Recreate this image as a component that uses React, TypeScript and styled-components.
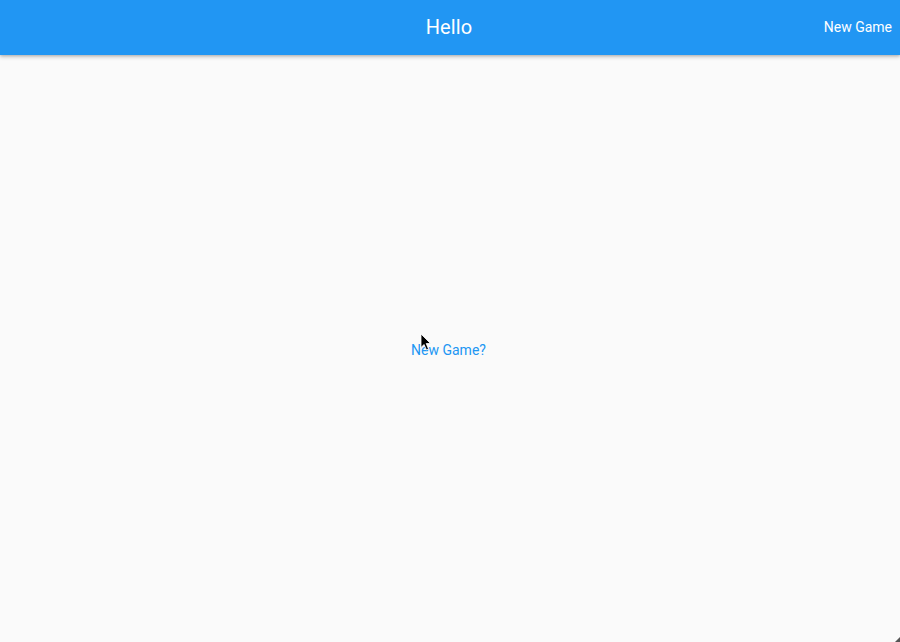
import React from "react";
import styled, { createGlobalStyle } from "styled-components";

const Global = createGlobalStyle`
  html, body { margin: 0; padding: 0; height: 100%; }
  body { background: #fafafa; font-family: Roboto, "Liberation Sans", sans-serif; }
  #root { height: 100%; }
`;

const Page = styled.div`
  display: flex;
  flex-direction: column;
  width: 900px;
  height: 642px;
  background: #fafafa;
  position: relative;
  overflow: hidden;
`;

const AppBar = styled.header`
  position: relative;
  z-index: 1;
  display: grid;
  grid-template-columns: 1fr auto 1fr;
  align-items: center;
  height: 55px;
  background: #2196f3;
  color: #fff;
  box-shadow: 0 2px 4px rgba(0, 0, 0, 0.2), 0 1px 2px rgba(0, 0, 0, 0.12);
`;

const Title = styled.h1`
  grid-column: 2;
  margin: 0 2px 2px 0;
  font-size: 20px;
  font-weight: 400;
  letter-spacing: 0.1px;
`;

const Actions = styled.div`
  grid-column: 3;
  display: flex;
  justify-content: flex-end;
  padding-right: 8px;
  padding-bottom: 2px;
`;

const BarButton = styled.button`
  background: none;
  border: none;
  color: #fff;
  font-family: inherit;
  font-size: 14px;
  padding: 0;
  cursor: pointer;
`;

const Body = styled.main`
  flex: 1;
  display: flex;
  align-items: center;
  justify-content: center;
  padding-top: 2px;
  position: relative;
`;

const TextButton = styled.button`
  background: none;
  border: none;
  color: #2196f3;
  font-family: inherit;
  font-size: 14px;
  padding: 0;
  margin-right: 3px;
  cursor: pointer;
`;

const Cursor = styled.svg`
  position: absolute;
  left: 420px;
  top: 333px;
  pointer-events: none;
`;

const Grip = styled.div`
  position: absolute;
  right: 0;
  bottom: 0;
  width: 0;
  height: 0;
  border-left: 5px solid transparent;
  border-bottom: 5px solid #555;
`;

export default function App() {
  return (
    <Page>
      <Global />
      <AppBar>
        <Title>Hello</Title>
        <Actions>
          <BarButton>New Game</BarButton>
        </Actions>
      </AppBar>
      <Body>
        <TextButton>New Game?</TextButton>
      </Body>
      <Cursor width="12" height="18" viewBox="0 0 12 18">
        <path d="M1 1 L1 14.5 L4 11.5 L6.5 17 L8.5 16 L6.2 10.5 L10.5 10.5 Z" fill="#000" stroke="#fff" strokeWidth="0.8" />
      </Cursor>
      <Grip />
    </Page>
  );
}
